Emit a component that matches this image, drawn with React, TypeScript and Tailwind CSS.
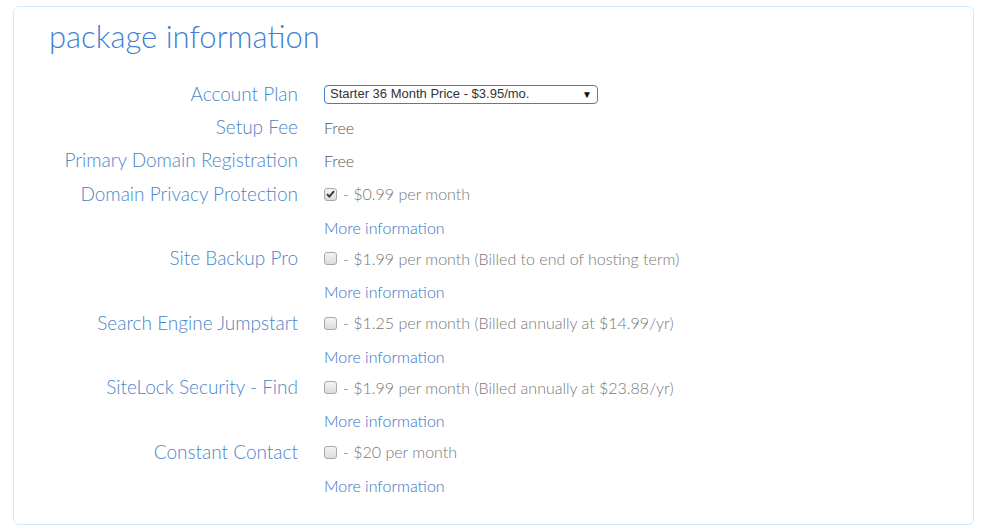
const font = "font-['Lato','Open_Sans',sans-serif]";

type Row = { label: string; price: string; checked?: boolean };

const extras: Row[] = [
  { label: 'Domain Privacy Protection', price: '- $0.99 per month', checked: true },
  { label: 'Site Backup Pro', price: '- $1.99 per month (Billed to end of hosting term)' },
  { label: 'Search Engine Jumpstart', price: '- $1.25 per month (Billed annually at $14.99/yr)' },
  { label: 'SiteLock Security - Find', price: '- $1.99 per month (Billed annually at $23.88/yr)' },
  { label: 'Constant Contact', price: '- $20 per month' },
];

function Label({ children }: { children?: React.ReactNode }) {
  return <div className="w-[249px] shrink-0 whitespace-nowrap text-right text-[19px] font-light text-[#4a86c8]">{children}</div>;
}

function Check({ on }: { on?: boolean }) {
  return (
    <span className="inline-flex h-[13px] w-[13px] items-center justify-center rounded-[3px] border border-[#a9a9a9] bg-gradient-to-b from-[#f4f4f4] to-[#dcdcdc]">
      {on && (
        <svg width="9" height="8" viewBox="0 0 9 8">
          <path d="M1 4.2 L3.4 6.6 L8 1.2" fill="none" stroke="#333" strokeWidth="1.8" />
        </svg>
      )}
    </span>
  );
}

export default function App() {
  return (
    <div className={`${font} bg-white px-[13px] pt-[6px]`}>
      <div className="h-[519px] rounded-[6px] border border-[#d5e8f8] pl-[35px] pt-[11px]">
        <h2 className="text-[31px] font-light leading-[36px] text-[#3f7fd4]">package information</h2>
        <div className="mt-[23px] flex flex-col">
          <div className="flex h-[34px] items-center gap-[26px]">
            <Label>Account Plan</Label>
            <div className="flex h-[19px] w-[274px] items-center justify-between rounded-[4px] border border-[#3f7fd4] pl-[5px] pr-[5px] font-['Liberation_Sans',sans-serif] text-[13px] text-[#333]">
              <span>Starter 36 Month Price - $3.95/mo.</span>
              <span className="text-[10px] text-[#111]">▼</span>
            </div>
          </div>
          <div className="flex h-[33px] items-center gap-[26px]">
            <Label>Setup Fee</Label>
            <span className="text-[16px] font-light text-[#555]">Free</span>
          </div>
          <div className="flex h-[33px] items-center gap-[26px]">
            <Label>Primary Domain Registration</Label>
            <span className="text-[16px] font-light text-[#555]">Free</span>
          </div>
          {extras.map((r) => (
            <div key={r.label}>
              <div className="flex h-[34px] items-center gap-[26px]">
                <Label>{r.label}</Label>
                <span className="flex items-center gap-[6px] text-[16px] font-light text-[#777]">
                  <Check on={r.checked} />
                  {r.price}
                </span>
              </div>
              <div className="flex h-[30.5px] items-start gap-[26px] pt-[4.5px]">
                <Label />
                <a className="text-[16px] leading-[24px] font-light text-[#3572c6]">More information</a>
              </div>
            </div>
          ))}
        </div>
      </div>
    </div>
  );
}
